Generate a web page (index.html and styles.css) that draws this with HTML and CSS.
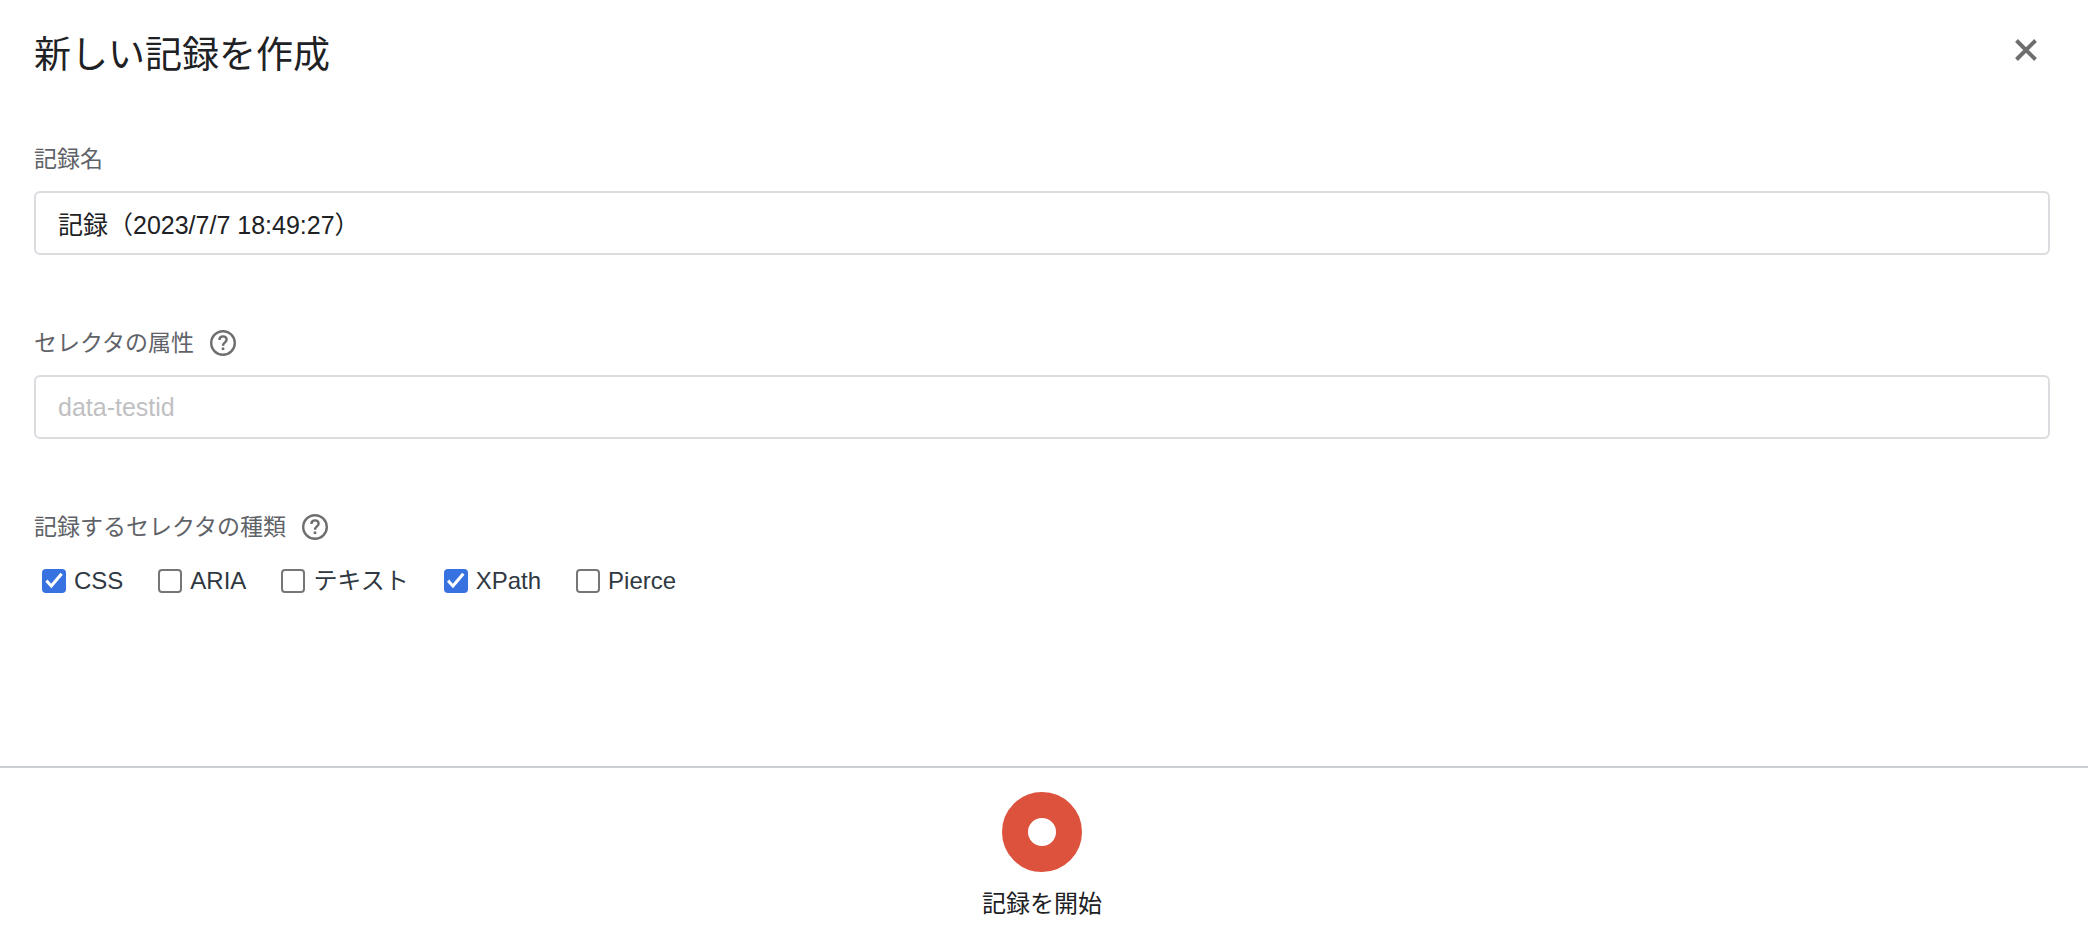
FILE: index.html
```html
<!DOCTYPE html>
<html lang="ja">
<head>
    <meta charset="utf-8">
    <meta name="viewport" content="width=device-width, initial-scale=1">
    <title>新しい記録を作成</title>
    <link rel="stylesheet" href="styles.css">
</head>
<body>

    <form class="recording">
        <div class="header">
            <h1>新しい記録を作成</h1>
            <button type="button" class="close" aria-label="閉じる">
                <svg viewBox="0 0 24 24"><path d="M2.5 2.5L21.5 21.5M21.5 2.5L2.5 21.5" /></svg>
            </button>
        </div>

        <div class="field">
            <div class="caption">
                <label for="name">記録名</label>
            </div>
            <input type="text" class="textbox" id="name" name="name" value="記録（2023/7/7 18:49:27）">
        </div>

        <div class="field">
            <div class="caption">
                <label for="attribute">セレクタの属性</label>
                <a href="#" class="help" aria-label="ヘルプ">
                    <svg viewBox="0 0 26 26">
                        <circle cx="13" cy="13" r="11.8" />
                        <path d="M9.4 10.1C9.4 7.8 11 6.4 13 6.4C15.1 6.4 16.6 7.8 16.6 9.7C16.6 12.4 13 12.6 13 15.8" />
                        <rect x="11.7" y="17.5" width="2.6" height="2.6" />
                    </svg>
                </a>
            </div>
            <input type="text" class="textbox" id="attribute" name="attribute" placeholder="data-testid">
        </div>

        <fieldset class="field">
            <legend class="caption">
                <span>記録するセレクタの種類</span>
                <a href="#" class="help" aria-label="ヘルプ">
                    <svg viewBox="0 0 26 26">
                        <circle cx="13" cy="13" r="11.8" />
                        <path d="M9.4 10.1C9.4 7.8 11 6.4 13 6.4C15.1 6.4 16.6 7.8 16.6 9.7C16.6 12.4 13 12.6 13 15.8" />
                        <rect x="11.7" y="17.5" width="2.6" height="2.6" />
                    </svg>
                </a>
            </legend>
            <div class="options">
                <label><input type="checkbox" name="css" checked>CSS</label>
                <label><input type="checkbox" name="aria">ARIA</label>
                <label><input type="checkbox" name="text">テキスト</label>
                <label><input type="checkbox" name="xpath" checked>XPath</label>
                <label><input type="checkbox" name="pierce">Pierce</label>
            </div>
        </fieldset>
    </form>

    <div class="footer">
        <button type="button" class="start">
            <span class="dot"></span>
            記録を開始
        </button>
    </div>

</body>
</html>
```

FILE: styles.css
```css
* {
    box-sizing: border-box;
}

body {
    display: flex;
    flex-direction: column;
    min-height: 100vh;
    margin: 0;
    background-color: #fff;
    color: #202124;
    font-family: "Liberation Sans", "Noto Sans CJK JP", sans-serif;
    font-size: 24px;
    line-height: 32px;
}

button, input {
    color: inherit;
    font: inherit;
}

button {
    padding: 0;
    border: none;
    background: none;
    cursor: pointer;
}

.recording {
    flex: 1;
    padding: 30px 38px 30px 34px;
}

.header {
    display: flex;
    justify-content: space-between;
    align-items: flex-start;
    margin-bottom: 61px;
}

h1 {
    margin: 0;
    font-size: 37px;
    font-weight: normal;
    line-height: 52px;
}

.close {
    width: 40px;
    height: 40px;
    margin-right: 4px;
}

    .close svg {
        display: block;
        width: 24px;
        height: 24px;
        margin: auto;
        stroke: #6e6e6e;
        stroke-width: 4;
    }

.field {
    margin: 0 0 72px;
    padding: 0;
    border: none;
}

.caption {
    display: flex;
    align-items: center;
    gap: 16px;
    padding: 0;
    margin-bottom: 16px;
    color: #5f6368;
    font-size: 23px;
}

.help svg {
    display: block;
    width: 26px;
    height: 26px;
    fill: none;
    stroke: #6e6e6e;
    stroke-width: 2.4;
}

.help rect {
    fill: #6e6e6e;
    stroke: none;
}

.textbox {
    display: block;
    width: 100%;
    height: 64px;
    padding: 0 22px;
    border: 2px solid #dadce0;
    border-radius: 6px;
    background-color: #fff;
    font-size: 25px;
}

    .textbox::placeholder {
        color: #bfc0c2;
    }

.options {
    display: flex;
    flex-wrap: wrap;
    gap: 35px;
    padding: 6px 0 0 8px;
    color: #303942;
}

    .options label {
        display: flex;
        align-items: center;
        gap: 8px;
    }

    .options input {
        appearance: none;
        width: 24px;
        height: 24px;
        margin: 0;
        border: 2px solid #767676;
        border-radius: 4px;
        background-color: #fff;
    }

    .options input:checked {
        border: none;
        background-color: #3871e0;
    }

    /* tick */
    .options input:checked::before {
        content: "";
        display: block;
        height: 100%;
        background-color: #fff;
        clip-path: polygon(14% 53%, 23% 44%, 38% 61%, 77% 16%, 87% 24%, 39% 80%);
    }

.footer {
    display: flex;
    justify-content: center;
    padding: 24px 38px 16px 34px;
    border-top: 2px solid #cacdd1;
}

.start {
    display: flex;
    flex-direction: column;
    align-items: center;
    gap: 16px;
}

.dot {
    width: 80px;
    height: 80px;
    border: 26px solid #dc523d;
    border-radius: 50%;
    background-color: #fff;
}
```
